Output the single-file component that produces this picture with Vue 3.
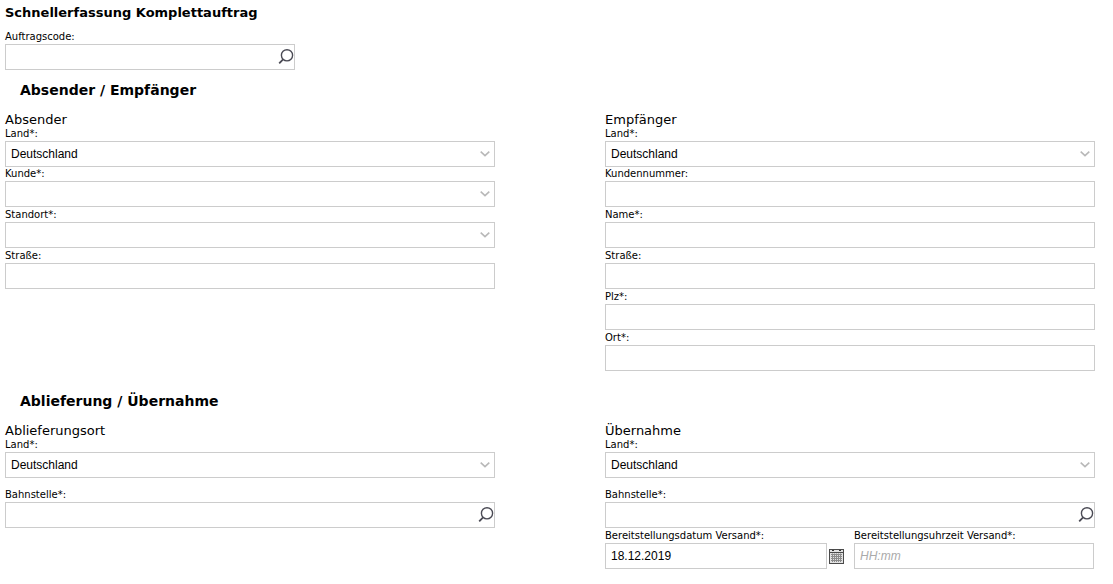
<script setup>
import { reactive } from 'vue'

const sections = reactive([
  {
    title: 'Absender / Empfänger',
    columns: [
      {
        title: 'Absender',
        fields: [
          { id: 'abs-land', label: 'Land*:', kind: 'select', value: 'Deutschland', tight: true },
          { id: 'abs-kunde', label: 'Kunde*:', kind: 'select', value: '' },
          { id: 'abs-standort', label: 'Standort*:', kind: 'select', value: '' },
          { id: 'abs-strasse', label: 'Straße:', kind: 'text', value: '' }
        ]
      },
      {
        title: 'Empfänger',
        fields: [
          { id: 'emp-land', label: 'Land*:', kind: 'select', value: 'Deutschland', tight: true },
          { id: 'emp-nummer', label: 'Kundennummer:', kind: 'text', value: '' },
          { id: 'emp-name', label: 'Name*:', kind: 'text', value: '' },
          { id: 'emp-strasse', label: 'Straße:', kind: 'text', value: '' },
          { id: 'emp-plz', label: 'Plz*:', kind: 'text', value: '' },
          { id: 'emp-ort', label: 'Ort*:', kind: 'text', value: '' }
        ]
      }
    ]
  },
  {
    title: 'Ablieferung / Übernahme',
    columns: [
      {
        title: 'Ablieferungsort',
        fields: [
          { id: 'abl-land', label: 'Land*:', kind: 'select', value: 'Deutschland', loose: true },
          { id: 'abl-bahn', label: 'Bahnstelle*:', kind: 'search', value: '' }
        ]
      },
      {
        title: 'Übernahme',
        fields: [
          { id: 'ueb-land', label: 'Land*:', kind: 'select', value: 'Deutschland', loose: true },
          { id: 'ueb-bahn', label: 'Bahnstelle*:', kind: 'search', value: '' }
        ],
        schedule: { date: '18.12.2019', time: '' }
      }
    ]
  }
])

const order = reactive({ code: '' })
</script>

<template>
  <form class="form" @submit.prevent>
    <h1>Schnellerfassung Komplettauftrag</h1>

    <div class="field code">
      <label for="code">Auftragscode:</label>
      <div class="control">
        <input id="code" v-model="order.code" class="box" type="text" />
        <button class="search" type="button" aria-label="Suchen">
          <svg width="16" height="17" viewBox="0 0 16 17" aria-hidden="true">
            <circle cx="9" cy="6.3" r="5.6" />
            <path d="M5.1 10.4 L1.2 14.4" />
          </svg>
        </button>
      </div>
    </div>

    <section v-for="section in sections" :key="section.title">
      <h2>{{ section.title }}</h2>
      <div class="columns">
        <div v-for="column in section.columns" :key="column.title">
          <h3>{{ column.title }}</h3>
          <div
            v-for="field in column.fields"
            :key="field.id"
            class="field"
            :class="{ tight: field.tight, loose: field.loose }"
          >
            <label :for="field.id">{{ field.label }}</label>
            <div class="control">
              <template v-if="field.kind === 'select'">
                <select :id="field.id" v-model="field.value" class="box">
                  <option value=""></option>
                  <option>Deutschland</option>
                </select>
                <svg class="chevron" width="10" height="6" viewBox="0 0 10 6" aria-hidden="true">
                  <path d="M0.7 0.7 L5 4.6 L9.3 0.7" />
                </svg>
              </template>
              <input v-else :id="field.id" v-model="field.value" class="box" type="text" />
              <button v-if="field.kind === 'search'" class="search" type="button" aria-label="Suchen">
                <svg width="16" height="17" viewBox="0 0 16 17" aria-hidden="true">
                  <circle cx="9" cy="6.3" r="5.6" />
                  <path d="M5.1 10.4 L1.2 14.4" />
                </svg>
              </button>
            </div>
          </div>

          <div v-if="column.schedule" class="schedule">
            <div class="field">
              <label for="datum">Bereitstellungsdatum Versand*:</label>
              <div class="date">
                <input id="datum" v-model="column.schedule.date" class="box" type="text" />
                <button class="calendar" type="button" aria-label="Kalender">
                  <svg width="16" height="16" viewBox="0 0 16 16" aria-hidden="true">
                    <rect x="0.5" y="1.5" width="14" height="14" fill="#e2e2e2" stroke="#4a4a4a" />
                    <path d="M1 4.5H14" stroke="#4a4a4a" />
                    <path d="M3 2.5H5M10 2.5H12" stroke="#333" />
                    <path d="M2 6.5H13M2 8.5H13M2 10.5H13M2 12.5H13M3.5 5.5V14M5.5 5.5V14M7.5 5.5V14M9.5 5.5V14M11.5 5.5V14" stroke="#8c8c8c" />
                  </svg>
                </button>
              </div>
            </div>
            <div class="field">
              <label for="zeit">Bereitstellungsuhrzeit Versand*:</label>
              <input id="zeit" v-model="column.schedule.time" class="box" type="text" placeholder="HH:mm" />
            </div>
          </div>
        </div>
      </div>
    </section>
  </form>
</template>

<style>
body {
  margin: 0;
  background: #fff;
}
</style>

<style scoped>
.form {
  padding: 5px 18px 14px 5px;
  color: #000;
  font-family: Verdana, "DejaVu Sans", sans-serif;
}

h1,
h2,
h3 {
  margin: 0;
}

h1 {
  margin-bottom: 9px;
  font-size: 13px;
  line-height: 16px;
}

h2 {
  margin-bottom: 13px;
  padding-left: 15px;
  font-size: 14px;
  line-height: 20px;
}

h3 {
  font-size: 13px;
  font-weight: 400;
  line-height: 14px;
}

section + section {
  margin-top: 19px;
}

.columns {
  display: grid;
  grid-template-columns: 1fr 1fr;
  gap: 110px;
}

.field {
  margin-bottom: 1px;
}

.field.tight {
  margin-bottom: 0;
}

.field.loose {
  margin-bottom: 10px;
}

.field.code {
  max-width: 290px;
  margin-bottom: 10px;
}

label {
  display: block;
  font-size: 10px;
  line-height: 14px;
}

.control {
  position: relative;
}

.box {
  display: block;
  box-sizing: border-box;
  width: 100%;
  height: 26px;
  margin: 0;
  padding: 0 5px;
  border: 1px solid #ccc;
  border-radius: 0;
  outline: none;
  background: #fff;
  color: #000;
  font-family: "Liberation Sans", Arial, sans-serif;
  font-size: 12px;
  appearance: none;
}

.box::placeholder {
  color: #aaa;
  font-style: italic;
}

.chevron {
  position: absolute;
  top: 10px;
  right: 5px;
  fill: none;
  stroke: #b8b8b8;
  stroke-width: 1.6;
  pointer-events: none;
}

button {
  padding: 0;
  border: 0;
  background: none;
  cursor: pointer;
}

button svg {
  display: block;
}

.search {
  position: absolute;
  top: 5px;
  right: 1px;
}

.search svg {
  fill: none;
  stroke: #4b4b55;
  stroke-width: 1.4;
}

.search path {
  stroke-width: 1.8;
}

.schedule {
  display: grid;
  grid-template-columns: 1fr 1fr;
  gap: 9px;
  padding-right: 1px;
}

.date {
  display: flex;
  align-items: center;
  gap: 2px;
}

.date .box {
  flex: 1;
  min-width: 0;
}
</style>
